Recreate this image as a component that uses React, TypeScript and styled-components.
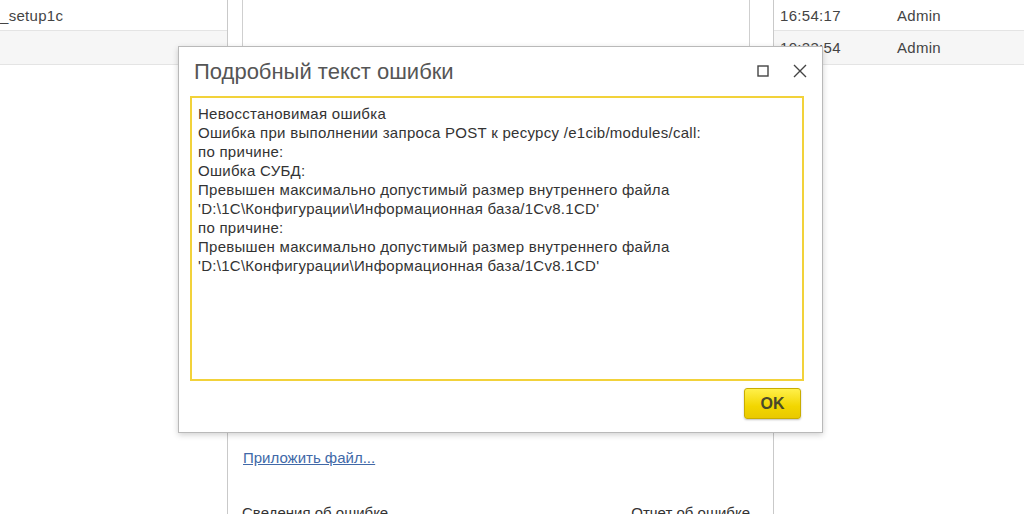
import * as React from 'react';
import styled, { createGlobalStyle } from 'styled-components';

const GlobalStyle = createGlobalStyle`
  html, body {
    margin: 0;
    padding: 0;
    background: #ffffff;
    font-family: Arial, "Liberation Sans", sans-serif;
    color: #333333;
  }
  #root {
    width: 1024px;
    height: 514px;
    overflow: hidden;
    position: relative;
  }
`;

const Page = styled.div`
  display: flex;
  width: 1024px;
  height: 514px;
  overflow: hidden;
`;

const LeftPanel = styled.div`
  width: 227px;
  flex-shrink: 0;
`;

const MiddlePanel = styled.div`
  width: 547px;
  flex-shrink: 0;
  box-sizing: border-box;
  border-left: 1px solid #c9c9c9;
  border-right: 1px solid #c9c9c9;
  display: flex;
  flex-direction: column;
  padding: 0 23px 0 14px;
`;

const RightPanel = styled.div`
  flex: 1;
`;

const Row = styled.div<{ $alt?: boolean; $height: number }>`
  display: flex;
  align-items: center;
  height: ${(p) => p.$height}px;
  border-bottom: 1px solid #e4e4e4;
  background: ${(p) => (p.$alt ? '#f6f6f6' : '#ffffff')};
  font-size: 15px;
  color: #444444;
  white-space: nowrap;
`;

const Cell = styled.span<{ $width?: number; $pad?: number }>`
  display: inline-block;
  width: ${(p) => (p.$width ? `${p.$width}px` : 'auto')};
  padding-left: ${(p) => p.$pad || 0}px;
  letter-spacing: 0.3px;
`;

const InnerBox = styled.div`
  height: 300px;
  flex-shrink: 0;
  border-left: 1px solid #cfcfcf;
  border-right: 1px solid #cfcfcf;
`;

const AttachLink = styled.a`
  margin-top: 149px;
  margin-left: 1px;
  font-size: 15px;
  color: #4169a8;
  text-decoration: underline;
  cursor: pointer;
  align-self: flex-start;
`;

const BottomRow = styled.div`
  display: flex;
  justify-content: space-between;
  margin-top: 38px;
  font-size: 15px;
  color: #333333;
  padding-right: 0;
`;

const Dialog = styled.div`
  position: absolute;
  left: 178px;
  top: 46px;
  width: 645px;
  height: 387px;
  background: #ffffff;
  border: 1px solid #b9b9b9;
  box-shadow: 0 2px 6px rgba(0, 0, 0, 0.18);
  display: flex;
  flex-direction: column;
  padding: 0 18px 0 11px;
  box-sizing: border-box;
`;

const Header = styled.div`
  display: flex;
  align-items: center;
  height: 48px;
  padding-left: 4px;
  margin-right: -7px;
`;

const Title = styled.div`
  flex: 1;
  font-size: 22px;
  color: #555555;
  padding-top: 2px;
`;

const HeaderButton = styled.button`
  border: none;
  background: transparent;
  padding: 0;
  width: 22px;
  height: 22px;
  display: flex;
  align-items: center;
  justify-content: center;
  cursor: pointer;
  margin-left: 15px;
`;

const TextBox = styled.div`
  height: 285px;
  border: 2px solid #f2d23a;
  padding: 6px 6px;
  box-sizing: border-box;
  font-size: 15px;
  letter-spacing: 0.28px;
  line-height: 19px;
  color: #333333;
  white-space: pre;
  margin-top: 1px;
`;

const Footer = styled.div`
  display: flex;
  justify-content: flex-end;
  padding-top: 7px;
`;

const OkButton = styled.button`
  width: 57px;
  height: 31px;
  margin-right: 3px;
  border: 1px solid #c9ad00;
  border-radius: 3px;
  background: linear-gradient(#fff04a, #f2d600 60%, #e9c900);
  box-shadow: 0 1px 2px rgba(0, 0, 0, 0.25);
  font-family: Arial, "Liberation Sans", sans-serif;
  font-size: 16px;
  font-weight: bold;
  color: #4a4a2a;
  cursor: pointer;
`;

const errorLines = [
  'Невосстановимая ошибка',
  'Ошибка при выполнении запроса POST к ресурсу /e1cib/modules/call:',
  'по причине:',
  'Ошибка СУБД:',
  'Превышен максимально допустимый размер внутреннего файла',
  "'D:\\1C\\Конфигурации\\Информационная база/1Cv8.1CD'",
  'по причине:',
  'Превышен максимально допустимый размер внутреннего файла',
  "'D:\\1C\\Конфигурации\\Информационная база/1Cv8.1CD'",
];

const MaximizeIcon = () => (
  <svg width="12" height="12" viewBox="0 0 12 12">
    <rect x="1" y="1" width="10" height="10" fill="none" stroke="#444" strokeWidth="1.4" />
  </svg>
);

const CloseIcon = () => (
  <svg width="14" height="14" viewBox="0 0 14 14">
    <path d="M1 1 L13 13 M13 1 L1 13" stroke="#444" strokeWidth="1.4" />
  </svg>
);

export default function App() {
  return (
    <>
      <GlobalStyle />
      <Page>
        <LeftPanel>
          <Row $height={30}>
            <Cell>_setup1c</Cell>
          </Row>
          <Row $height={33} $alt />
        </LeftPanel>
        <MiddlePanel>
          <InnerBox />
          <AttachLink>Приложить файл...</AttachLink>
          <BottomRow>
            <span>Сведения об ошибке</span>
            <span>Отчет об ошибке</span>
          </BottomRow>
        </MiddlePanel>
        <RightPanel>
          <Row $height={30}>
            <Cell $width={117} $pad={6}>16:54:17</Cell>
            <Cell>Admin</Cell>
          </Row>
          <Row $height={33} $alt>
            <Cell $width={117} $pad={6}>10:23:54</Cell>
            <Cell>Admin</Cell>
          </Row>
        </RightPanel>
      </Page>
      <Dialog>
        <Header>
          <Title>Подробный текст ошибки</Title>
          <HeaderButton title="Развернуть">
            <MaximizeIcon />
          </HeaderButton>
          <HeaderButton title="Закрыть">
            <CloseIcon />
          </HeaderButton>
        </Header>
        <TextBox>{errorLines.join('\n')}</TextBox>
        <Footer>
          <OkButton>OK</OkButton>
        </Footer>
      </Dialog>
    </>
  );
}
